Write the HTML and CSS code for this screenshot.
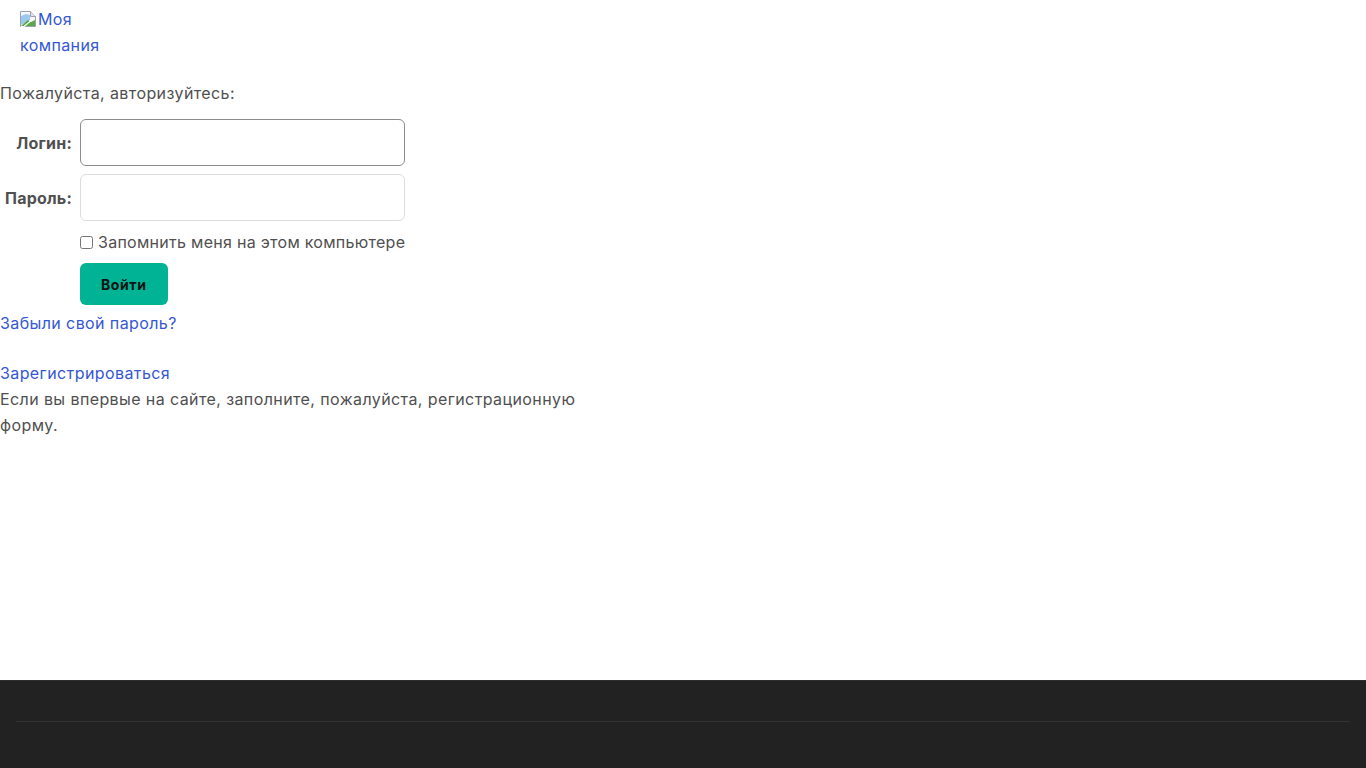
FILE: index.html
```html
<!DOCTYPE html>
<html lang="ru">
<head>
    <meta charset="UTF-8">
    <title>Авторизация</title>
    <link rel="stylesheet" href="styles.css">
</head>
<body>
    <!-- Header with logo -->
    <header class="site-header">
        <a class="logo" href="#">
            <svg class="broken-img" width="16" height="16" viewBox="0 0 16 16" aria-hidden="true">
                <path d="M0.5 0.5h10l5 5v10h-15z" fill="#f4f6f8" stroke="#9aa3ad"/>
                <path d="M10.5 0.5v5h5" fill="#dfe3e8" stroke="#9aa3ad"/>
                <path d="M1 5l5 -2 4 1v5l-9 5z" fill="#9cc7ee"/>
                <path d="M1 15l7 -6 3 2 4 -2v6z" fill="#5aa845"/>
                <path d="M13 8l-9 7.5h-3" fill="none" stroke="#ffffff" stroke-width="1.2"/>
            </svg>Моя компания
        </a>
    </header>

    <main class="content">
        <p class="intro">Пожалуйста, авторизуйтесь:</p>
        <form class="auth-form">
            <table class="auth-table">
                <tr>
                    <td class="label">Логин:</td>
                    <td><input type="text" class="field field-active"></td>
                </tr>
                <tr>
                    <td class="label">Пароль:</td>
                    <td><input type="password" class="field"></td>
                </tr>
                <tr>
                    <td></td>
                    <td><label class="remember"><input type="checkbox">Запомнить меня на этом компьютере</label></td>
                </tr>
                <tr>
                    <td></td>
                    <td><button type="button" class="btn-login">Войти</button></td>
                </tr>
            </table>
        </form>

        <p class="forgot"><a href="#">Забыли свой пароль?</a></p>

        <p class="register"><a href="#">Зарегистрироваться</a><br>
            Если вы впервые на сайте, заполните, пожалуйста, регистрационную форму.</p>
    </main>

    <footer class="site-footer">
        <div class="footer-line"></div>
    </footer>
</body>
</html>
```

FILE: styles.css
```css
body {
    font-family: Inter, "Noto Sans", sans-serif;
    font-size: 16px;
    line-height: 26px;
    letter-spacing: 0.4px;
    color: #505050;
    margin: 0;
    display: flex;
    flex-direction: column;
    min-height: 100vh;
}

a {
    color: #3457d5;
    text-decoration: none;
}

.site-header {
    padding: 6px 20px 0;
}

.logo {
    display: inline-block;
    width: 90px;
}

.broken-img {
    vertical-align: -2px;
    margin-right: 2px;
}

.content {
    flex: 1;
}

.intro {
    margin: 22px 0 9px;
}

.auth-table {
    border-collapse: collapse;
}

.auth-table td {
    padding: 4px;
}

.auth-table td.label {
    text-align: right;
    font-weight: bold;
    letter-spacing: 0.2px;
    padding-left: 5px;
}

.field {
    box-sizing: border-box;
    width: 325px;
    height: 47px;
    border: 1px solid #dcdcdc;
    border-radius: 6px;
    padding: 0 12px;
    font: inherit;
    display: block;
}

.field-active {
    border-color: #8c8c8c;
}

.remember {
    display: flex;
    align-items: center;
    letter-spacing: 0.28px;
}

.remember input {
    margin: 0 5px 0 0;
    width: 13px;
    height: 13px;
}

.btn-login {
    background: #00b394;
    border: none;
    border-radius: 6px;
    color: #111111;
    font-family: inherit;
    font-weight: bold;
    font-size: 14px;
    letter-spacing: 0.6px;
    height: 42px;
    padding: 0 21px;
    cursor: pointer;
}

.forgot {
    margin: 1px 0 24px;
}

.register {
    margin: 0;
    max-width: 600px;
}

.site-footer {
    background-color: #222222;
    border-top: 1px solid #2e2e2e;
    padding: 40px 16px 46px;
}

.footer-line {
    border-top: 1px solid #333333;
}
```
